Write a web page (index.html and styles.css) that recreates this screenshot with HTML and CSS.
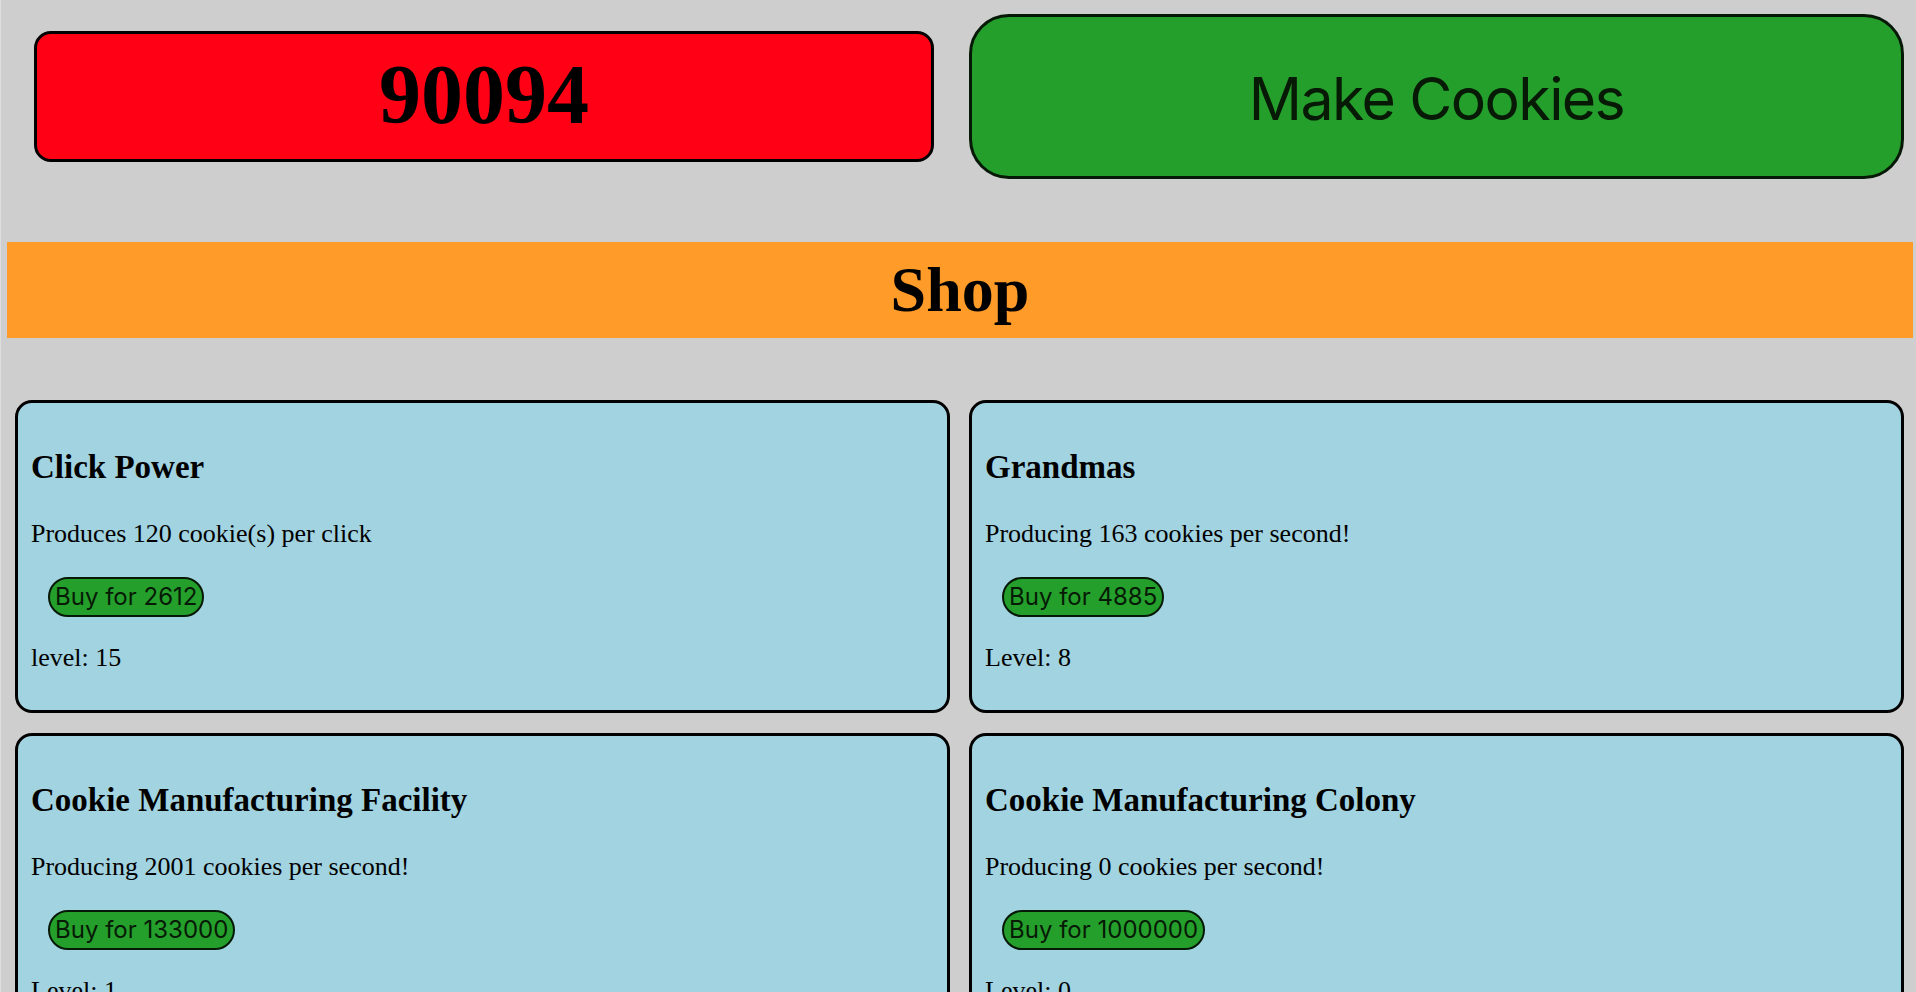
FILE: index.html
```html
<!DOCTYPE html>
<html lang="en">
<head>
<meta charset="utf-8">
<title>Cookie Clicker</title>
<link rel="stylesheet" href="styles.css">
</head>
<body>
  <div class="top">
    <div class="counter">90094</div>
    <button class="make">Make Cookies</button>
  </div>
  <h1 class="shop">Shop</h1>
  <div class="grid">
    <div class="card">
      <h2>Click Power</h2>
      <p>Produces 120 cookie(s) per click</p>
      <button class="buy">Buy for 2612</button>
      <p class="level">level: 15</p>
    </div>
    <div class="card">
      <h2>Grandmas</h2>
      <p>Producing 163 cookies per second!</p>
      <button class="buy">Buy for 4885</button>
      <p class="level">Level: 8</p>
    </div>
    <div class="card">
      <h2>Cookie Manufacturing Facility</h2>
      <p>Producing 2001 cookies per second!</p>
      <button class="buy">Buy for 133000</button>
      <p class="level">Level: 1</p>
    </div>
    <div class="card">
      <h2>Cookie Manufacturing Colony</h2>
      <p>Producing 0 cookies per second!</p>
      <button class="buy">Buy for 1000000</button>
      <p class="level">Level: 0</p>
    </div>
  </div>
</body>
</html>
```
FILE: styles.css
```css
html {
  background: #cecece;
}
body {
  margin: 0;
  background: #cecece;
  font-family: "Liberation Serif", "Times New Roman", serif;
  color: #000;
  border-left: 1px solid #dedede;
}
.top {
  display: grid;
  grid-template-columns: 1fr 1fr;
  column-gap: 19px;
  padding: 0 12px 0 14px;
  align-items: start;
}
.counter {
  margin: 31px 16px 0 19px;
  height: 131px;
  box-sizing: border-box;
  background: #ff0015;
  border: 3px solid #000;
  border-radius: 17px;
  font-weight: bold;
  font-size: 84px;
  line-height: 121px;
  text-align: center;
}
.make {
  margin-top: 14px;
  height: 165px;
  width: 100%;
  box-sizing: border-box;
  background: #259f2b;
  border: 3px solid #061806;
  border-radius: 40px;
  font-family: Inter, "Liberation Sans", sans-serif;
  font-size: 59px;
  letter-spacing: -1.6px;
  color: #061a06;
  padding: 4px 0 0 0;
  cursor: pointer;
}
.shop {
  margin: 63px 3px 0 6px;
  height: 96px;
  background: #ff9b28;
  font-size: 64px;
  line-height: 96px;
  font-weight: bold;
  text-align: center;
}
.grid {
  display: grid;
  grid-template-columns: 1fr 1fr;
  gap: 20px 19px;
  margin-top: 62px;
  padding: 0 12px 0 14px;
}
.card {
  background: #a2d3e1;
  border: 3px solid #000;
  border-radius: 17px;
  padding: 44px 13px 37px 13px;
  display: flex;
  flex-direction: column;
  align-items: flex-start;
}
.card h2 {
  margin: 0;
  font-size: 33px;
  line-height: 40px;
  font-weight: bold;
}
.card p {
  margin: 32px 0 0 0;
  font-size: 26px;
  line-height: 30px;
}
.card .level {
  margin-top: 26px;
}
.buy {
  margin: 28px 0 0 17px;
  background: #259f2b;
  border: 2px solid #061806;
  border-radius: 20px;
  padding: 2px 5px;
  font-family: Inter, "Liberation Sans", sans-serif;
  font-size: 24px;
  line-height: 32px;
  color: #061a06;
  cursor: pointer;
}
```
